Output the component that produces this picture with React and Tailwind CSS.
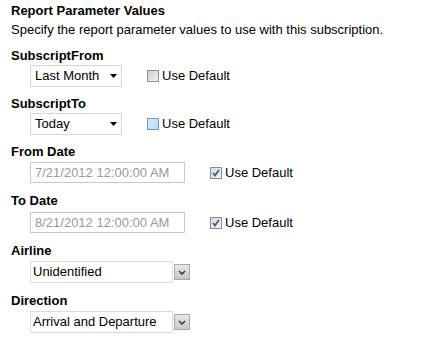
import { useState } from "react";

function Caret() {
  return (
    <svg width="7" height="4" viewBox="0 0 7 4" className="shrink-0">
      <path d="M0 0 H7 L3.5 4 Z" fill="#000" />
    </svg>
  );
}

function Check({ checked, hover }) {
  return (
    <span
      className={
        "w-[12px] h-[12px] border flex items-center justify-center " +
        (hover
          ? "border-[#6a9cc4] bg-gradient-to-br from-[#d6ecf8] to-[#b9dcf2]"
          : checked
          ? "border-[#8a8a8a] bg-gradient-to-br from-[#d9d9d9] to-[#f6f6f6]"
          : "border-[#8f8f8f] bg-gradient-to-br from-[#cfcfcf] to-[#f4f4f4]")
      }
    >
      {checked && (
        <svg width="8" height="8" viewBox="0 0 8 8">
          <path d="M1 4 L3 6.5 L7 1" stroke="#4a5a8c" strokeWidth="1.8" fill="none" />
        </svg>
      )}
    </span>
  );
}

function UseDefault({ checked, hover, ml }) {
  return (
    <div className={"flex items-center gap-[3px] " + ml}>
      <Check checked={checked} hover={hover} />
      <span className="leading-[16px]">Use Default</span>
    </div>
  );
}

function DropList({ value }) {
  return (
    <div className="w-[92px] h-[22px] border border-[#d6d6d6] bg-white flex items-center justify-between pl-[4px] pr-[4px]">
      <span className="leading-[16px]">{value}</span>
      <Caret />
    </div>
  );
}

function DateBox({ value }) {
  return (
    <div className="w-[155px] h-[21px] border border-[#c8c8c8] bg-white flex items-center pl-[4px] text-[#9a9a9a]">
      <span className="leading-[16px]">{value}</span>
    </div>
  );
}

function Combo({ value }) {
  return (
    <div className="flex items-center gap-[1px]">
      <div className="w-[143px] h-[22px] border border-[#dcdcdc] bg-white flex items-center pl-[2px]">
        <span className="leading-[16px]">{value}</span>
      </div>
      <div className="w-[16px] h-[16px] border border-[#a8a8a8] bg-gradient-to-b from-[#e8e8e8] to-[#c9c9c9] flex items-center justify-center">
        <svg width="8" height="5" viewBox="0 0 8 5">
          <path d="M1 1 L4 4 L7 1" stroke="#3a3a3a" strokeWidth="1.6" fill="none" />
        </svg>
      </div>
    </div>
  );
}

function Label({ text, mt }) {
  return <div className={"font-bold h-[16px] leading-[16px] " + mt}>{text}</div>;
}

export default function App() {
  const [from] = useState("7/21/2012 12:00:00 AM");
  const [to] = useState("8/21/2012 12:00:00 AM");

  return (
    <div className="w-[422px] h-[355px] bg-white text-black text-[13px] font-['Liberation_Sans',Arial,sans-serif] px-[11px] pt-[3px] flex flex-col">
      <div className="font-bold h-[16px] leading-[16px]">Report Parameter Values</div>
      <div className="mt-[3px] h-[16px] leading-[16px]">
        Specify the report parameter values to use with this subscription.
      </div>

      <Label text="SubscriptFrom" mt="mt-[10px]" />
      <div className="mt-[1px] ml-[19px] flex items-center">
        <DropList value="Last Month" />
        <UseDefault ml="ml-[25px]" />
      </div>

      <Label text="SubscriptTo" mt="mt-[9px]" />
      <div className="mt-[1px] ml-[19px] flex items-center">
        <DropList value="Today" />
        <UseDefault hover ml="ml-[25px]" />
      </div>

      <Label text="From Date" mt="mt-[9px]" />
      <div className="mt-[2px] ml-[19px] flex items-center">
        <DateBox value={from} />
        <UseDefault checked ml="ml-[25px]" />
      </div>

      <Label text="To Date" mt="mt-[10px]" />
      <div className="mt-[3px] ml-[19px] flex items-center">
        <DateBox value={to} />
        <UseDefault checked ml="ml-[25px]" />
      </div>

      <Label text="Airline" mt="mt-[10px]" />
      <div className="mt-[2px] ml-[19px]">
        <Combo value="Unidentified" />
      </div>

      <Label text="Direction" mt="mt-[10px]" />
      <div className="mt-[2px] ml-[19px]">
        <Combo value="Arrival and Departure" />
      </div>
    </div>
  );
}
